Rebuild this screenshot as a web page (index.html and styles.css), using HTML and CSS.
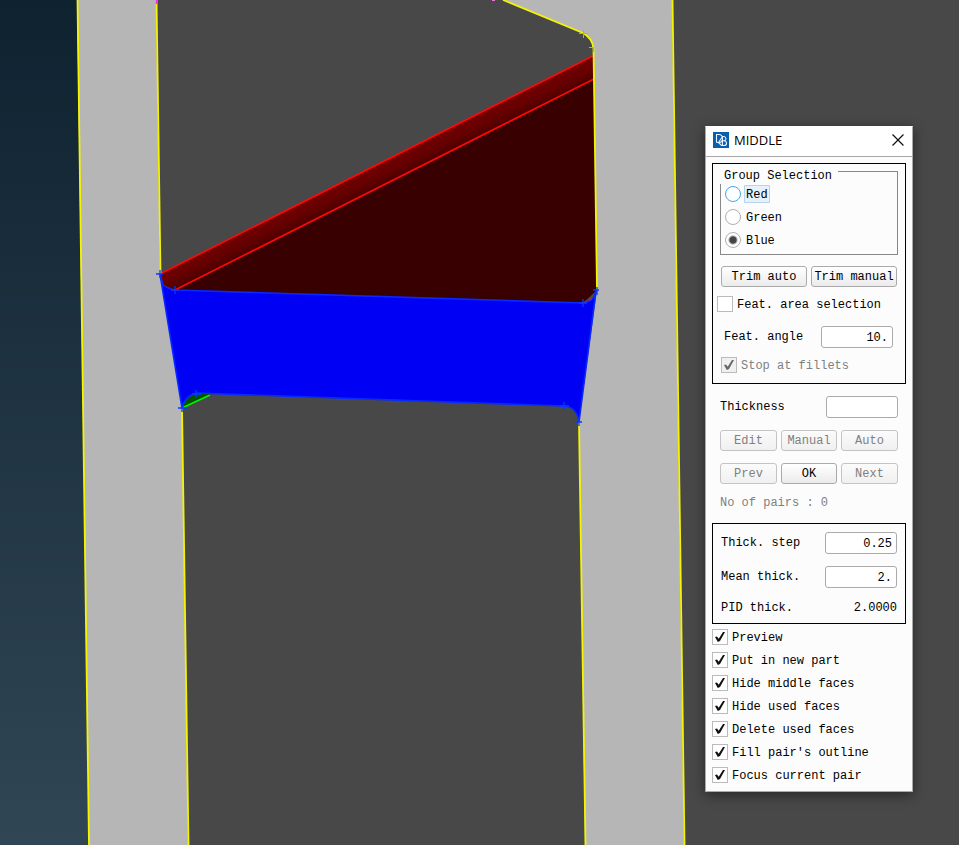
FILE: index.html
```html
<!DOCTYPE html>
<html lang="en">
<head>
<meta charset="utf-8">
<title>Middle</title>
<link rel="stylesheet" href="styles.css">
</head>
<body>
<main class="viewport">
  <svg class="scene" viewBox="0 0 959 845" preserveAspectRatio="xMidYMid slice" aria-hidden="true">
    <defs>
      <linearGradient id="sky" x1="0" y1="0" x2="0" y2="1">
        <stop offset="0" stop-color="#0e2230"/>
        <stop offset="1" stop-color="#314655"/>
      </linearGradient>
      <linearGradient id="fillet" gradientUnits="userSpaceOnUse" x1="370" y1="168" x2="380" y2="188">
        <stop offset="0" stop-color="#740000"/>
        <stop offset="0.5" stop-color="#650000"/>
        <stop offset="1" stop-color="#4a0000"/>
      </linearGradient>
    </defs>
    <rect width="959" height="845" fill="#484848"/>
    <path d="M0 0H77L89 845H0Z" fill="url(#sky)"/>
    <path d="M77 0H156L160 274L182 408L188 845H89Z" fill="#b6b6b6"/>
    <path d="M503 0L583 33Q592 38 593 48L597 290L579 422L585 845H684L672 0Z" fill="#b6b6b6"/>
    <path d="M175 290L594 79L597 290L583 303Z" fill="#380000"/>
    <path d="M160 274L593 56L594 79L175 290L163 285Z" fill="url(#fillet)"/>
    <path d="M160 274L593 56M175 290L594 79" fill="none" stroke="#ff0808" stroke-width="1.7"/>
    <g fill="none" stroke="#f4f400" stroke-width="1.8">
      <path d="M77.500 0L89 845"/>
      <path d="M156.500 0L160.500 274"/>
      <path d="M182 408L188.500 845"/>
      <path d="M503 0L583 33Q592 38 593.500 48L597 290"/>
      <path d="M579 422L585.500 845"/>
      <path d="M672.500 0L684.500 845"/>
    </g>
    <path d="M182 408Q184 397 196 394L212 394Z" fill="#005400"/>
    <path d="M182 408L210 395" stroke="#00f400" stroke-width="1.6"/>
    <path d="M160 274L163 285Q168 289 175 290L583 303Q590 302 594 297L596 291L579 422Q577 407 564 406L196 393Q184 397 182 408Z" fill="#0000f5" stroke="#0828ff" stroke-width="1.6"/>
    <path d="M583 303L593 298" stroke="#ee1028" stroke-width="1.2" stroke-dasharray="4 2"/>
    <path d="M156 274H163M160 270V278M171 290H179M175 286V294M178 408H187M182 405V412M192 394H201M196 390V398M579 303H587M583 299V307M593 290H599M597 287V295M560 406H569M564 402V410M575 422H582M579 418V426" fill="none" stroke="#0838ff" stroke-width="1.3"/>
    <path d="M579 33.500H588M583.500 30V38M589 47.500H594M593.500 47V52M492 .500H495" fill="none" stroke="#ee77dd"/>
    <path d="M156.500 0V4" stroke="#f030f0" stroke-width="1.6"/>
  </svg>

  <section class="dialog" role="dialog" aria-labelledby="dialog-title">
    <header class="titlebar">
      <svg class="logo" viewBox="0 0 16 16" aria-hidden="true">
        <rect width="16" height="16" fill="#075fae"/>
        <path d="M3.500 10.500V2.500H6.500Q9.500 3 9.500 6.500Q9.500 10.500 6 10.500H3.500M9.500 4.500H11Q13 4.800 13 6.800Q13 8.500 11 8.700Q13.500 9 13.500 11.200Q13.500 13.500 11 13.500H8.500L5.500 10.500M9.500 4.500V13.500M9.500 8.700H11M5.500 10.500L9.500 4.500" fill="none" stroke="#e8f3ff" stroke-width="1.1"/>
      </svg>
      <h1 class="title" id="dialog-title">MIDDLE</h1>
      <button class="close" type="button" aria-label="Close">
        <svg viewBox="0 0 11 11" aria-hidden="true"><path d="M.5 .5L10.500 10.500M10.500 .5L.5 10.500" stroke="#111" stroke-width="1.100"/></svg>
      </button>
    </header>

    <form class="content">
      <div class="panel">
        <fieldset class="group">
          <legend class="legend">Group Selection</legend>
          <label class="option focused"><input type="radio" name="group"><span>Red</span></label>
          <label class="option"><input type="radio" name="group"><span>Green</span></label>
          <label class="option"><input type="radio" name="group" checked><span>Blue</span></label>
        </fieldset>
        <div class="pair">
          <button class="button" type="button">Trim auto</button>
          <button class="button" type="button">Trim manual</button>
        </div>
        <label class="check area"><input type="checkbox"><span>Feat. area selection</span></label>
        <div class="field angle"><label for="angle">Feat. angle</label><input id="angle" type="text" value="10."></div>
        <label class="check fillets"><input type="checkbox" checked disabled><span>Stop at fillets</span></label>
      </div>

      <div class="actions">
        <div class="field"><label for="thickness">Thickness</label><input id="thickness" type="text"></div>
        <div class="triple">
          <button class="button" type="button" disabled>Edit</button>
          <button class="button" type="button" disabled>Manual</button>
          <button class="button" type="button" disabled>Auto</button>
          <button class="button" type="button" disabled>Prev</button>
          <button class="button" type="button">OK</button>
          <button class="button" type="button" disabled>Next</button>
        </div>
        <p class="pairs">No of pairs : 0</p>
      </div>

      <div class="panel values">
        <div class="field"><label for="step">Thick. step</label><input id="step" type="text" value="0.25"></div>
        <div class="field"><label for="mean">Mean thick.</label><input id="mean" type="text" value="2."></div>
        <div class="readout"><span>PID thick.</span><output>2.0000</output></div>
      </div>

      <div class="checks">
        <label class="check"><input type="checkbox" checked><span>Preview</span></label>
        <label class="check"><input type="checkbox" checked><span>Put in new part</span></label>
        <label class="check"><input type="checkbox" checked><span>Hide middle faces</span></label>
        <label class="check"><input type="checkbox" checked><span>Hide used faces</span></label>
        <label class="check"><input type="checkbox" checked><span>Delete used faces</span></label>
        <label class="check"><input type="checkbox" checked><span>Fill pair's outline</span></label>
        <label class="check"><input type="checkbox" checked><span>Focus current pair</span></label>
      </div>
    </form>
  </section>
</main>
</body>
</html>
```
FILE: styles.css
```css
* {
  box-sizing: border-box;
}

body {
  margin: 0;
  background: #484848;
}

.viewport {
  position: relative;
  min-height: 100vh;
  overflow: hidden;
}

.scene {
  position: absolute;
  inset: 0;
  width: 100%;
  height: 100%;
}

/* Floating tool window */
.dialog {
  position: absolute;
  top: 126px;
  right: 46px;
  width: 208px;
  border: 1px solid #aaa;
  border-top-color: #fff;
  background: #fcfcfc;
  box-shadow: 0 3px 12px rgba(0, 0, 0, 0.45);
  color: #000;
  font: 12px/16px "Liberation Mono", monospace;
  white-space: nowrap;
}

.titlebar {
  display: flex;
  align-items: center;
  height: 30px;
  padding: 0 8px 3px 7px;
  border-bottom: 1px solid #a8a8a8;
  background: #fff;
}

.logo {
  width: 16px;
  height: 16px;
}

.title {
  flex: 1;
  margin: 0 0 0 5px;
  font: 13px/16px "Open Sans", sans-serif;
}

.close {
  display: flex;
  padding: 0;
  border: 0;
  background: none;
}

.close svg {
  width: 12px;
  height: 12px;
}

.content {
  padding: 6px 6px 8px;
}

.panel {
  border: 1px solid #000;
}

.group {
  position: relative;
  display: grid;
  gap: 7px;
  min-width: 0;
  margin: 7px 7px 0;
  padding: 14px 4px 6px;
  border: 1px solid #888;
}

.legend {
  position: absolute;
  top: -4px;
  left: -1px;
  width: 118px;
  padding: 0 0 0 4px;
  background: #fcfcfc;
}

.option,
.check {
  display: flex;
  align-items: center;
  height: 16px;
  gap: 4px;
}

.option {
  gap: 3px;
}

.option span,
.check span {
  padding-top: 2px;
}

.option span {
  padding-right: 2px;
  padding-left: 2px;
}

.option.focused span {
  border-radius: 1px;
  background: #e6f1fb;
  box-shadow: inset 0 0 0 1px #b4d5ee;
}

input {
  margin: 0;
  appearance: none;
}

input[type="radio"],
input[type="checkbox"] {
  flex: none;
  width: 16px;
  height: 16px;
  border: 1px solid #b0b0b0;
  background: #fff;
}

input[type="radio"] {
  border-radius: 50%;
}

input[type="radio"]:checked {
  background: radial-gradient(circle, #444 0 3px, #fff 5px);
}

.focused input[type="radio"] {
  border-color: #45a5ee;
}

input[type="checkbox"] {
  display: grid;
  place-items: center;
  border-color: #bbb;
}

input[type="checkbox"]:checked::before {
  content: "";
  width: 10px;
  height: 10px;
  background: #111;
  clip-path: polygon(0 50%, 20% 44%, 37% 68%, 80% 0, 100% 0, 50% 90%, 28% 100%);
}

input[type="checkbox"]:disabled {
  background: #f0f0f0;
}

input[type="checkbox"]:disabled::before {
  background: #666;
}

input:disabled + span {
  color: #808080;
}

input[type="text"] {
  width: 72px;
  height: 22px;
  padding: 2px 4px 0;
  border: 1px solid #aaa;
  border-radius: 3px;
  background: #fff;
  color: #000;
  font: inherit;
  text-align: right;
}

.button {
  min-width: 0;
  height: 21px;
  padding: 0;
  border: 1px solid #aaa;
  border-radius: 3px;
  background: linear-gradient(#fff, #ebebeb);
  color: #000;
  font: inherit;
}

.button:disabled {
  border-color: #c4c4c4;
  background: linear-gradient(#fbfbfb, #f0f0f0);
  color: #808080;
}

.pair {
  display: grid;
  grid-template-columns: 1fr 1fr;
  gap: 4px;
  margin: 11px 8px 9px;
}

.area {
  margin-left: 4px;
}

.field,
.readout {
  display: flex;
  align-items: center;
  justify-content: space-between;
}

.angle {
  margin: 14px 12px 9px 11px;
}

.fillets {
  margin: 0 0 10px 8px;
}

.actions {
  margin: 12px 8px;
}

.triple {
  display: grid;
  grid-template-columns: 57px 1fr 57px;
  gap: 12px 4px;
  margin: 12px 0 11px;
}

.pairs {
  margin: 0;
  color: #808080;
}

.values {
  display: grid;
  gap: 12px;
  padding: 8px;
}

.values .readout {
  height: 15px;
}

.checks {
  display: grid;
  gap: 7px;
  margin-top: 5px;
}
```
